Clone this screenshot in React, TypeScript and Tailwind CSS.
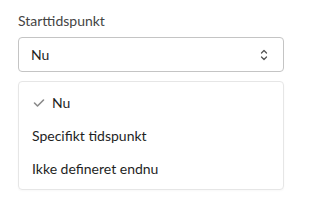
import React from 'react';

const options = ['Nu', 'Specifikt tidspunkt', 'Ikke defineret endnu'];

const ChevronsUpDown = () => (
  <svg width="10" height="14" viewBox="0 0 10 14" fill="none" stroke="#555" strokeWidth="1.3" strokeLinecap="round" strokeLinejoin="round">
    <path d="M2.5 5 L5 2.5 L7.5 5" />
    <path d="M2.5 9 L5 11.5 L7.5 9" />
  </svg>
);

const Check = () => (
  <svg width="12" height="10" viewBox="0 0 12 10" fill="none" stroke="#8a8a8a" strokeWidth="1.6" strokeLinecap="round" strokeLinejoin="round">
    <path d="M1.5 5 L4.5 8 L10.5 2" />
  </svg>
);

export default function App() {
  const selected = 'Nu';
  return (
    <div className="w-[311px] h-[208px] bg-white pl-[18px] pt-[11px]" style={{ fontFamily: 'Lato, "Noto Sans", sans-serif' }}>
      <div className="w-[266px]">
        <label className="block text-[14px] leading-[20px] text-[#444]">Starttidspunkt</label>
        <button className="mt-[6px] w-full h-[35px] flex items-center justify-between border border-[#c4c4c4] rounded-[4px] pl-[12px] pr-[14px] text-[14px] text-[#1f1f1f]">
          <span>{selected}</span>
          <ChevronsUpDown />
        </button>
        <ul className="mt-[9px] border border-[#e6e6e6] rounded-[4px] py-[4px] shadow-[0_1px_2px_rgba(0,0,0,0.03)]">
          {options.map((o) => (
            <li key={o} className="h-[33px] flex items-center pl-[13px] text-[14px] text-[#1f1f1f]">
              {o === selected ? (
                <>
                  <span className="w-[20px] flex items-center pl-[1px]"><Check /></span>
                  <span>{o}</span>
                </>
              ) : (
                <span>{o}</span>
              )}
            </li>
          ))}
        </ul>
      </div>
    </div>
  );
}
